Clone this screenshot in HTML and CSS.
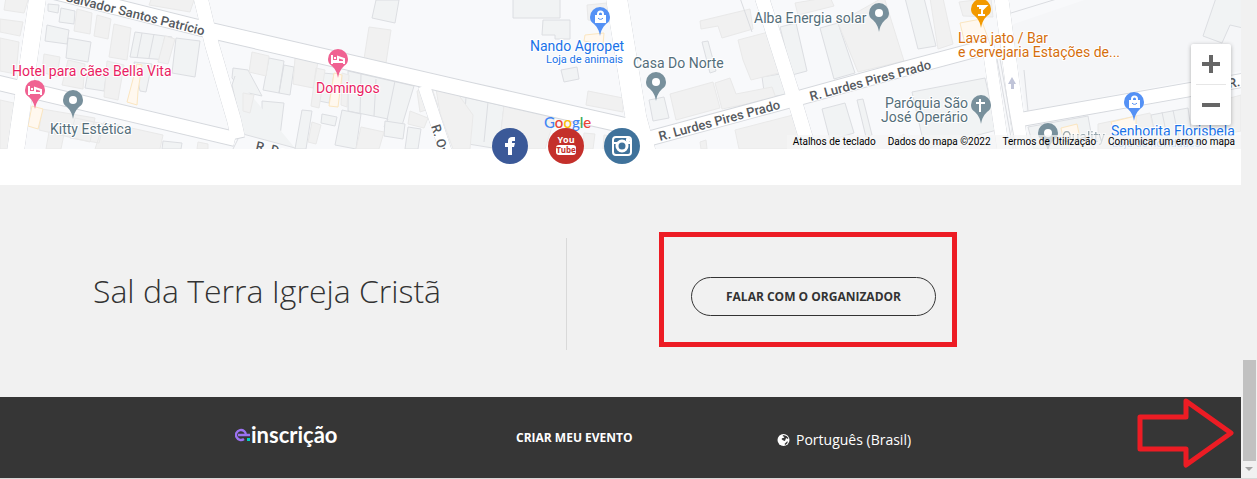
FILE: index.html
```html
<!DOCTYPE html>
<html lang="pt-BR">
<head>
    <meta charset="UTF-8">
    <meta name="viewport" content="width=device-width, initial-scale=1.0">
    <title>Sal da Terra Igreja Cristã</title>
    <link rel="stylesheet" href="styles.css">
</head>
<body>

    <div class="page">

        <!-- Map -->
        <section class="map">
            <svg class="map-canvas" viewBox="0 0 1241 149" preserveAspectRatio="xMidYMin slice">
                <defs>
                    <path id="pin" d="M0 0C-1-6-3-9-6-12C-9-14-10-16-10-19A10 10 0 0 1 10-19C10-16 9-14 6-12C3-9 1-6 0 0Z"/>
                    <g id="roads">
                        <path d="M40-12L200 28L460 88L645 130" stroke-width="15"/>
                        <path d="M-5 82L235 139" stroke-width="14"/>
                        <path d="M38-5L15 155" stroke-width="17"/>
                        <path d="M200-5L212 45L234 120L238 138" stroke-width="14"/>
                        <path d="M424 86L447 155" stroke-width="12"/>
                        <path d="M616-5L636 118L646 155" stroke-width="21"/>
                        <path d="M640 141L795 99L900 70L990 46" stroke-width="14"/>
                        <path d="M761-5L793 95L811 155" stroke-width="14"/>
                        <path d="M988 45L1004 155" stroke-width="12"/>
                        <path d="M1001-5L1012 80L1022 155" stroke-width="14"/>
                        <path d="M1018 120L1080 109L1250 79" stroke-width="13"/>
                    </g>
                </defs>

                <rect class="land" width="1241" height="149"/>
                <path class="block" d="M1011 25L1090 -2H1241V71L1026 111Z"/>

                <!-- Buildings with outline -->
                <g class="building outlined">
                    <path d="M48 4L59 5L58 13L48 11ZM61 8L75 11L74 24L59 22ZM47 25L69 30L67 44L45 41ZM68 38L91 42L88 62L66 58Z"/>
                    <path d="M135 32L172 37L167 60L130 57ZM142 33L137 58M154 34L149 58M165 36L160 59"/>
                    <path d="M176 38L200 41L195 77L172 73ZM134 62L152 64L146 92L140 91ZM88 72L106 77L104 91L85 88Z"/>
                    <path d="M233 68L248 70L262 96L244 92L232 78ZM269 58L284 61L279 93L263 90ZM284 65L294 67L290 95L279 93ZM323 73L334 74L329 103L319 101Z"/>
                    <path d="M376 0L372 18L395 23L399 0ZM348 71L414 86L400 132L384 127L388 119L348 111ZM361 74L360 114M376 79L374 116M395 81L387 120"/>
                    <path d="M262 101L284 103L280 136L254 132L257 110L262 110ZM322 114L337 117L335 126L321 123ZM302 110L312 111L306 149H295ZM342 110L361 114L356 149L335 145ZM385 121L405 124L403 139L384 136ZM408 127L421 129L418 149H405Z"/>
                    <path d="M513-2H560V18H513ZM543 20H570V39H555V35H542ZM561 70L577 67L579 79L564 82ZM649 100L664 97L669 118L653 121Z"/>
                    <path d="M460 96L504 106L499 149L462 143ZM466 97L463 139M488 102L484 142M702 42L708 41L716 71L710 73ZM762 77L786 73L790 94L765 98Z"/>
                    <path d="M780 27L796 23L807 71L792 75ZM820 28L838 23L855 73L834 79ZM905-2L924-2L936 46L918 49ZM822 109L845 103L854 133L830 140ZM857 100L863 99L872 135L866 137ZM912 92L985 78L997 130L925 149Z"/>
                    <path d="M1028 127L1088 116L1094 149H1034ZM1151 115L1188 108L1193 142L1158 149ZM1162 112L1169 146M1173 110L1180 144M1216-2L1203 36L1222 43L1230 25L1243 28V-2Z"/>
                    <path d="M163 141L182 143L181 149H162ZM235 76L232 85L243 134L295 148M238 139L233 149"/>
                </g>

                <!-- Plain buildings -->
                <g class="building">
                    <path d="M6-3L29-3L24 13L4 10ZM0 19L23 22L20 36L0 32ZM0 38L19 42L16 74L0 71ZM77 9L92 13L90 34L74 31ZM97 15L111 19L108 39L94 36ZM114 24L131 28L127 60L109 57Z"/>
                    <path d="M152-3L195-3L190 12L149 5ZM165 36L175 39L168 64L158 62ZM44 54L60 57L57 77L42 72ZM68 60L85 64L83 89L62 85ZM107 61L124 65L118 100L104 97Z"/>
                    <path d="M0 100L14 103L8 149H0ZM42 109L95 118L90 142L39 130ZM49 132L64 134L61 149H46ZM75 118L104 124L99 143L70 138ZM104 122L163 135L160 149H95ZM198 142L208 144V149H197Z"/>
                    <path d="M252 52L269 56L266 76L249 72ZM295 58L318 62L313 88L293 84ZM316 68L325 70L319 108L311 106ZM342 73L349 75L347 107L341 105ZM369 27L391 30L386 63L364 59ZM243 93L254 95L250 113L243 111ZM312 122L321 125L316 144L308 142Z"/>
                    <path d="M417 91L432 88L438 106L420 112ZM410 111L428 118L424 128L408 124ZM436 89L458 94L473 115L470 149H453L440 113ZM361 127L384 132L379 149H356Z"/>
                    <path d="M504 105L555 117L545 149H499ZM587 5L607 3L609 22L588 20ZM588 91L623 98V112L586 105ZM670 94L713 82L720 108L676 120ZM700 21L750 9L753 29L722 38L718 26L701 29ZM738 40L772 31L783 72L751 80L743 60ZM715 83L730 78L736 94L772 87L776 98L722 109Z"/>
                    <path d="M735 130L793 115L803 149H739ZM795 3L830-3L834 6L798 15ZM838 23L884-3L904 61L858 72ZM930-2L943-2L953 44L938 49ZM959 2L991-2L993 17L963 16ZM899 137L904 134L906 149H900ZM700 142L706 140L707 149H701ZM584 133L595 134L593 149H583ZM604 135L640 139L641 149H603ZM1098 124L1150 113L1158 149H1098ZM1194 108L1241 95V131L1199 139Z"/>
                </g>

                <!-- Highlighted places -->
                <g class="place">
                    <path d="M137 64L142 65L138 91L137 105L127 102Z"/>
                    <path d="M334 73L342 75L338 107L329 106Z"/>
                    <path d="M585 35L604 33L603 45L584 41Z"/>
                    <path d="M32 106L43 109L38 129L28 126Z"/>
                    <path d="M960 23L981 19L988 38L965 44ZM1061 128L1077 124L1080 138L1064 142ZM1111 122L1136 116V128H1113Z"/>
                </g>

                <use href="#roads" class="road-edge"/>
                <use href="#roads" class="road"/>
                <path class="line" d="M1011 13L1060-2M1024 70L1028 111M997 59L1013 149M1000 59L1016 149M740-2L752 32"/>
                <path class="arrow" d="M1012 77L1016 84H1014V89H1011V84H1008Z"/>

                <!-- Street names -->
                <g class="street">
                    <text transform="translate(65 1) rotate(14)">Salvador Santos Patrício</text>
                    <text transform="translate(660 141) rotate(-15)">R. Lurdes Pires Prado</text>
                    <text transform="translate(811 101) rotate(-15)">R. Lurdes Pires Prado</text>
                    <text transform="translate(431 126) rotate(73)">R. Ovídio</text>
                    <text transform="translate(255 150) rotate(13)">R. Domingos</text>
                    <text transform="translate(1229 88) rotate(-10)">R.</text>
                </g>

                <!-- Places -->
                <g class="label pink">
                    <use href="#pin" x="35" y="109"/>
                    <path class="glyph" d="M29 86V95M29 93H41V95M41 93V90L35 88V92H30M31 89H33"/>
                    <text x="12" y="76">Hotel para cães Bella Vita</text>
                    <use href="#pin" x="338" y="78"/>
                    <path class="glyph" d="M332 55V64M332 62H344V64M344 62V59L338 57V61H333M334 58H336"/>
                    <text x="316" y="93">Domingos</text>
                </g>
                <g class="label gray">
                    <use href="#pin" x="73" y="119"/><circle cx="73" cy="100" r="4"/>
                    <text x="50" y="134">Kitty Estética</text>
                    <use href="#pin" x="656" y="101"/><circle cx="656" cy="82" r="4"/>
                    <text x="633" y="68">Casa Do Norte</text>
                    <use href="#pin" x="879" y="32"/><circle cx="879" cy="13" r="4"/>
                    <text x="754" y="23">Alba Energia solar</text>
                    <use href="#pin" x="981" y="124"/>
                    <path class="glyph" d="M980 99V112M976 103H985"/>
                    <text x="968" y="108" text-anchor="end">Paróquia São</text>
                    <text x="968" y="122" text-anchor="end">José Operário</text>
                    <use href="#pin" x="1048" y="152"/><circle cx="1048" cy="133" r="4"/>
                    <text x="1062" y="142" opacity="0.6">Quality</text>
                </g>
                <g class="label blue">
                    <use href="#pin" x="600" y="36"/>
                    <path class="bag" d="M595 15H606V23H595Z"/><path class="bag-handle" d="M598 15V14A2 2 0 0 1 603 14V15"/><path class="bag-smile" d="M598 18A3 3 0 0 0 603 18"/>
                    <text x="530" y="51">Nando Agropet</text>
                    <text class="small" x="546" y="63">Loja de animais</text>
                    <use href="#pin" x="1134" y="121"/>
                    <path class="bag" d="M1129 100H1140V108H1129Z"/><path class="bag-handle" d="M1132 100V99A2 2 0 0 1 1137 99V100"/><path class="bag-smile" d="M1132 103A3 3 0 0 0 1137 103"/>
                    <text x="1111" y="136">Senhorita Florisbela</text>
                    <text class="small" x="1112" y="147" opacity="0.6">Loja de novidades</text>
                </g>
                <g class="label orange">
                    <use href="#pin" x="981" y="28"/>
                    <path class="glyph" d="M977 6H986L982 10V14M978 15H985M979 8H984"/>
                    <text x="958" y="43">Lava jato / Bar</text>
                    <text x="958" y="57">e cervejaria Estações de...</text>
                </g>
            </svg>

            <a href="#" class="google"><span class="b">G</span><span class="r">o</span><span class="y">o</span><span class="b">g</span><span class="g">l</span><span class="r">e</span></a>

            <div class="zoom">
                <button type="button" aria-label="Aumentar o zoom">
                    <svg width="18" height="18"><path d="M7 0H11V7H18V11H11V18H7V11H0V7H7Z"/></svg>
                </button>
                <button type="button" aria-label="Diminuir o zoom">
                    <svg width="18" height="18"><path d="M0 7H18V11H0Z"/></svg>
                </button>
            </div>

            <div class="map-terms">
                <button type="button">Atalhos de teclado</button>
                <span>Dados do mapa ©2022</span>
                <a href="#">Termos de Utilização</a>
                <a href="#">Comunicar um erro no mapa</a>
            </div>
        </section>

        <!-- Social links -->
        <nav class="social">
            <a href="#" aria-label="Facebook">
                <svg viewBox="0 0 36 36">
                    <circle cx="18" cy="18" r="18" fill="#3b5998"/>
                    <path fill="#fff" d="M16 27V19H13V15H16V13C16 10 18 9 20 9H23V13H21C20 13 20 13 20 14V15H23L22 19H20V27Z"/>
                </svg>
            </a>
            <a href="#" aria-label="YouTube">
                <svg viewBox="0 0 36 36">
                    <circle cx="18" cy="18" r="18" fill="#c4302b"/>
                    <text class="yt" x="18" y="15" fill="#fff">You</text>
                    <rect x="8" y="17" width="20" height="10" rx="3" fill="#fff"/>
                    <text class="yt tube" x="18" y="25" fill="#c4302b">Tube</text>
                </svg>
            </a>
            <a href="#" aria-label="Instagram">
                <svg viewBox="0 0 36 36">
                    <circle cx="18" cy="18" r="18" fill="#3f729b"/>
                    <rect x="9" y="9" width="18" height="18" rx="3" fill="none" stroke="#fff" stroke-width="2"/>
                    <path d="M9 15H13M23 15H27" stroke="#fff" stroke-width="2"/>
                    <circle cx="18" cy="18" r="5" fill="none" stroke="#fff" stroke-width="3"/>
                    <rect x="22" y="10" width="4" height="4" rx="1" fill="#fff"/>
                </svg>
            </a>
        </nav>

        <!-- Organizer -->
        <section class="organizer">
            <div class="organizer-name">
                <h2>Sal da Terra Igreja Cristã</h2>
            </div>
            <div class="organizer-contact">
                <div class="highlight">
                    <button type="button" class="btn-contact">FALAR COM O ORGANIZADOR</button>
                </div>
            </div>
        </section>

        <footer class="footer">
            <a href="#" class="logo">
                <svg width="16" height="16" viewBox="0 0 16 16">
                    <path d="M3 8H15M11 8A5 5 0 1 0 9 12" fill="none" stroke="#9b72f2" stroke-width="2.4"/>
                    <rect x="12" y="11" width="3" height="3" fill="#00d0c0"/>
                </svg>
                <span>inscrição</span>
            </a>
            <a href="#" class="create">CRIAR MEU EVENTO</a>
            <a href="#" class="language">
                <svg width="13" height="12" viewBox="0 0 12 12">
                    <circle cx="6" cy="6" r="6" fill="#fff"/>
                    <path fill="#363636" d="M5 2L6 1L9 2L11 4L10 5L9 4L8 5L8 6L7 7L5 6L4 5L5 4L6 4L7 3ZM8 9L10 7L10 9L8 11L7 10Z"/>
                </svg>
                <span>Português (Brasil)</span>
            </a>
            <svg class="pointer" width="98" height="70" viewBox="0 0 98 70">
                <path d="M3 19H49V3L94 35L49 67V51H3Z"/>
            </svg>
        </footer>
    </div>

    <!-- Scroll bar -->
    <div class="scrollbar">
        <div class="thumb"></div>
        <div class="down"></div>
    </div>

</body>
</html>
```
FILE: styles.css
```css
* {
    margin: 0;
    padding: 0;
    box-sizing: border-box;
}

body {
    display: flex;
    min-height: 100vh;
    font-family: 'Open Sans', sans-serif;
    background-color: #fff;
    color: #333;
    border-bottom: 1px solid #d9d9d9;
}

a {
    color: inherit;
    text-decoration: none;
}

button {
    font: inherit;
    color: inherit;
    background: none;
    border: none;
    cursor: pointer;
}

.page {
    flex: 1;
    min-width: 0;
    display: flex;
    flex-direction: column;
}

/* Map */
.map {
    position: relative;
    height: 149px;
    overflow: hidden;
    font-family: Roboto, sans-serif;
}

.map-canvas {
    display: block;
    width: 100%;
    height: 100%;
}

.land {
    fill: #f8f9fb;
}

.block {
    fill: #f5f6f8;
}

.building {
    fill: #f1f1f1;
    stroke: #e9e9e9;
}

.building.outlined {
    fill: #f1f3f4;
    stroke: #dcdee2;
}

.place {
    fill: #fff8ef;
    stroke: #fbe6c0;
}

/* The shadows give the roads their thin grey edge */
.road-edge {
    fill: none;
    stroke: #d5d8dd;
    filter: drop-shadow(0 1px 0 #d5d8dd) drop-shadow(0 -1px 0 #d5d8dd);
}

.road,
.line {
    fill: none;
    stroke: #fff;
}

.line {
    stroke: #dadce0;
}

.arrow {
    fill: #c0c4d8;
}

.street text {
    font-size: 13px;
    font-weight: 500;
    fill: #55595e;
    stroke: #fff;
    stroke-width: 2px;
    paint-order: stroke;
}

.label text {
    font-size: 14px;
    stroke: #fff;
    stroke-width: 2px;
    paint-order: stroke;
}

.label text.small {
    font-size: 11px;
}

.label circle,
.bag {
    fill: #fff;
}

.glyph,
.bag-handle {
    fill: none;
    stroke: #fff;
    stroke-width: 2px;
}

.bag-smile {
    fill: none;
    stroke: #5491f5;
}

.pink { fill: #f06292; }
.pink text { fill: #e91e63; }
.gray { fill: #78909c; }
.gray text { fill: #546e7a; }
.blue { fill: #5491f5; }
.blue text { fill: #1a73e8; }
.orange { fill: #f29900; }
.orange text { fill: #d56e0c; }

.google {
    position: absolute;
    left: 544px;
    bottom: 17px;
    font: 500 15px/20px Lato, sans-serif;
}

.google .b { color: #4285f4; }
.google .r { color: #ea4335; }
.google .y { color: #fbbc05; }
.google .g { color: #34a853; }

.zoom {
    position: absolute;
    right: 10px;
    top: 44px;
    width: 40px;
    background: #fff;
    border-radius: 2px;
    box-shadow: 0 1px 4px rgba(0, 0, 0, 0.3);
}

.zoom button {
    display: flex;
    align-items: center;
    justify-content: center;
    width: 100%;
    height: 40px;
    fill: #666;
}

.zoom button + button {
    border-top: 1px solid #e6e6e6;
    width: 30px;
    height: 41px;
    margin: 0 5px;
}

.map-terms {
    position: absolute;
    right: 0;
    bottom: 0;
    display: flex;
    font-size: 10px;
    line-height: 14px;
    color: #000;
}

.map-terms > * {
    padding: 0 6px;
    background: rgba(245, 245, 245, 0.7);
}

/* Social links */
.social {
    position: relative;
    display: flex;
    justify-content: center;
    gap: 20px;
    height: 36px;
    padding-right: 109px;
}

.social a {
    width: 36px;
    height: 36px;
    margin-top: -21px;
}

.social svg {
    display: block;
}

.yt {
    font: bold 9px 'Liberation Sans Narrow', 'Open Sans', sans-serif;
    text-anchor: middle;
}

.tube {
    font-size: 8px;
}

/* Organizer */
.organizer {
    display: flex;
    align-items: center;
    flex: 1;
    min-height: 212px;
    background: #f1f1f1;
}

.organizer-name {
    display: flex;
    justify-content: center;
    width: 567px;
    height: 112px;
    padding: 33px 32px 0 0;
    border-right: 1px solid #d9d9d9;
    margin-top: 6px;
}

.organizer-name h2 {
    font-size: 32px;
    font-weight: 300;
    line-height: 40px;
}

.organizer-contact {
    margin-left: 124px;
    margin-top: 10px;
}

.highlight {
    position: relative;
}

/* Red frame around the contact button */
.highlight::before {
    content: "";
    position: absolute;
    top: -45px;
    right: -21px;
    bottom: -31px;
    left: -32px;
    border: 5px solid #ed1c24;
    pointer-events: none;
}

.btn-contact {
    display: block;
    width: 245px;
    height: 39px;
    border: 1px solid #333;
    border-radius: 20px;
    font-size: 12px;
    font-weight: 700;
}

/* Footer */
.footer {
    position: relative;
    display: flex;
    align-items: center;
    height: 81px;
    padding-left: 235px;
    background: #363636;
    color: #fff;
}

.logo {
    display: flex;
    align-items: center;
    width: 281px;
    padding-bottom: 5px;
    font: bold 22px/24px Lato, sans-serif;
}

.create {
    width: 261px;
    font-size: 12px;
    font-weight: 700;
}

.language {
    display: flex;
    align-items: center;
    gap: 6px;
    padding-top: 4px;
    font-size: 14px;
}

.pointer {
    position: absolute;
    right: 6px;
    top: 1px;
    fill: none;
    stroke: #ed1c24;
    stroke-width: 5px;
    stroke-linejoin: round;
}

/* Scroll bar */
.scrollbar {
    display: flex;
    flex-direction: column;
    justify-content: flex-end;
    align-items: center;
    width: 16px;
    background: #f1f1f1;
}

.thumb {
    width: 13px;
    height: 101px;
    background: #c1c1c1;
}

.down {
    margin: 6px 0 7px;
    border: 4px solid transparent;
    border-top-color: #a3a3a3;
    border-bottom: 0;
}
```
